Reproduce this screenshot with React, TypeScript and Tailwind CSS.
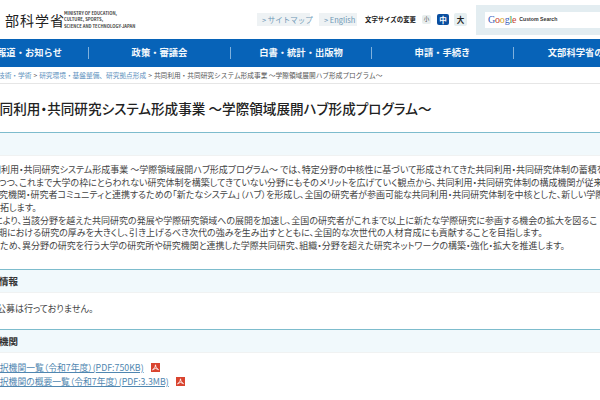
const SANS = "font-['Noto_Sans_CJK_JP','Noto_Sans',sans-serif]";

function Pdf() {
  return (
    <svg viewBox="0 0 10 10" className="ml-[7px] h-[9px] w-[9px] shrink-0 self-center">
      <rect width="10" height="10" fill="#d9442f" />
      <path d="M5 2 L5.6 5 L8.4 7.4 L5 6 L1.6 7.6 L4.4 5 Z" fill="none" stroke="#fff" strokeWidth="0.9" />
    </svg>
  );
}

function Line({ ml, children }: { ml: string; children: React.ReactNode }) {
  return <p className={`h-[12.7px] whitespace-nowrap leading-[12.7px] ${ml}`}>{children}</p>;
}

function Bar({ children, mt }: { children?: React.ReactNode; mt: string }) {
  return (
    <div className={`flex h-[24px] items-center border-t-[1.5px] border-b border-t-[#7dbccd] border-b-[#f0f2f2] bg-[#f1f9fc] text-[9.5px] font-bold text-[#333] ${mt}`}>
      {children}
    </div>
  );
}

const NAV = [
  { t: "報道・お知らせ", w: "ml-[-29px] w-[118px]" },
  { t: "政策・審議会", w: "w-[142px]" },
  { t: "白書・統計・出版物", w: "w-[141px]" },
  { t: "申請・手続き", w: "w-[142px]" },
  { t: "文部科学省の紹介", w: "w-[142px]" },
];

export default function App() {
  return (
    <div className={`h-[400px] w-[600px] overflow-hidden bg-white text-[#444] ${SANS}`}>
      {/* header */}
      <header className="flex h-[39px] items-center">
        <div className="ml-[-20px] w-[82px] shrink-0 whitespace-nowrap text-[14px] leading-none tracking-[1px] text-[#222]">
          <span className="mr-[10px]">文</span>部科学省
        </div>
        <div className="ml-[2px] w-[72px] shrink-0 text-[4.2px] font-bold leading-[6.4px] text-[#444]">
          <div>MINISTRY OF EDUCATION,</div>
          <div>CULTURE, SPORTS,</div>
          <div className="whitespace-nowrap">SCIENCE AND TECHNOLOGY-JAPAN</div>
        </div>
        <div className="ml-[121px] flex h-[13px] w-[53px] shrink-0 items-center whitespace-nowrap bg-[#eef2f4] pl-[5px] text-[7.5px] text-[#6d97b5]">&gt; サイトマップ</div>
        <div className="ml-[9px] flex h-[13px] w-[38px] shrink-0 items-center whitespace-nowrap bg-[#eef2f4] pl-[5px] text-[7.5px] text-[#6d97b5]">&gt; English</div>
        <div className="ml-[8px] w-[52px] shrink-0 whitespace-nowrap text-[6.4px] font-bold text-[#222]">文字サイズの変更</div>
        <div className="ml-[5px] flex h-[9px] w-[9px] shrink-0 items-center justify-center rounded-[2px] bg-[#e8eeee] text-[5.5px] text-[#444]">小</div>
        <div className="ml-[6px] flex h-[11px] w-[12px] shrink-0 items-center justify-center rounded-[2px] bg-[#0b4f9f] text-[7.5px] font-bold text-white">中</div>
        <div className="ml-[5px] flex h-[13px] w-[13px] shrink-0 items-center justify-center rounded-[2px] bg-[#e6eff1] text-[7.5px] font-bold text-[#222]">大</div>
        <div className="ml-[9px] flex h-[30px] w-[124px] shrink-0 items-center bg-[#e3edf1] pl-[9px]">
          <div className="flex h-[16px] flex-1 items-center whitespace-nowrap bg-white pl-[3px] font-['Liberation_Sans',sans-serif] text-[5.2px] font-bold text-[#333]">
            <span className="mr-[3px] font-['Liberation_Serif',serif] text-[10px] font-normal tracking-[-0.2px]">
              <span className="text-[#3a62c0]">G</span>
              <span className="text-[#c8402e]">o</span>
              <span className="text-[#d8a82e]">o</span>
              <span className="text-[#3a62c0]">g</span>
              <span className="text-[#3f9a45]">l</span>
              <span className="text-[#c8402e]">e</span>
            </span>
            Custom Search
          </div>
        </div>
      </header>

      {/* nav */}
      <nav className="flex h-[28px] items-center whitespace-nowrap bg-[#0763b8] text-[9.3px] font-bold text-[#f3f8fc]">
        {NAV.map((n, i) => (
          <div key={n.t} className={`flex h-[12px] shrink-0 items-center justify-center ${n.w} ${i < 4 ? "border-r border-r-[#7fb1dd]" : ""}`}>
            {n.t}
          </div>
        ))}
      </nav>

      {/* breadcrumb */}
      <div className="flex h-[17px] items-center whitespace-nowrap border-b border-b-[#e6e6e6] text-[6.7px] text-[#555]">
        <span className="ml-[-2px] text-[#5c90bd]">技術・学術</span>
        <span className="mx-[2px]">&gt;</span>
        <span className="text-[#5c90bd]">研究環境・基盤整備、研究拠点形成</span>
        <span className="mx-[2px]">&gt;</span>
        <span>共同利用・共同研究システム形成事業 ～学際領域展開ハブ形成プログラム～</span>
      </div>

      {/* title */}
      <h1 className="ml-[-14px] mt-[14px] whitespace-nowrap text-[13.6px] font-medium leading-[20px] text-[#222] [font-feature-settings:'palt']">共同利用・共同研究システム形成事業 ～学際領域展開ハブ形成プログラム～</h1>

      <Bar mt="mt-[14px]" />

      <div className="mt-[8px] text-[9px] text-[#444] [font-feature-settings:'palt']">
        <Line ml="ml-[-17px]">共同利用・共同研究システム形成事業 ～学際領域展開ハブ形成プログラム～ では、特定分野の中核性に基づいて形成されてきた共同利用・共同研究体制の蓄積を</Line>
        <Line ml="ml-[-2px]">つつ、これまで大学の枠にとらわれない研究体制を構築してきていない分野にもそのメリットを広げていく観点から、共同利用・共同研究体制の構成機関が従来</Line>
        <Line ml="ml-[-1px]">究機関・研究者コミュニティと連携するための「新たなシステム」（ハブ）を形成し、全国の研究者が参画可能な共同利用・共同研究体制を中核とした、新しい学際研究</Line>
        <Line ml="ml-[0px]">拓します。</Line>
        <Line ml="ml-[-6px]">により、当該分野を越えた共同研究の発展や学際研究領域への展開を加速し、全国の研究者がこれまで以上に新たな学際研究に参画する機会の拡大を図るこ</Line>
        <Line ml="ml-[-2px]">期における研究の厚みを大きくし、引き上げるべき次代の強みを生み出すとともに、全国的な次世代の人材育成にも貢献することを目指します。</Line>
        <Line ml="ml-[0px]">ため、異分野の研究を行う大学の研究所や研究機関と連携した学際共同研究、組織・分野を超えた研究ネットワークの構築・強化・拡大を推進します。</Line>
      </div>

      <Bar mt="mt-[16px]">
        <span className="ml-[-1px]">情報</span>
      </Bar>
      <p className="ml-[-3px] mt-[9px] h-[27px] whitespace-nowrap text-[9px] leading-[13px] [font-feature-settings:'palt']">公募は行っておりません。</p>

      <Bar mt="mt-0">
        <span className="ml-[-1px]">機関</span>
      </Bar>
      <ul className="mt-[8px] text-[8.8px] leading-[14px] text-[#4f86b0] [font-feature-settings:'palt']">
        <li className="ml-[-9px] flex whitespace-nowrap"><span className="underline">採択機関一覧（令和7年度）(PDF:750KB)</span><Pdf /></li>
        <li className="ml-[-9px] flex whitespace-nowrap"><span className="underline">採択機関の概要一覧（令和7年度）(PDF:3.3MB)</span><Pdf /></li>
      </ul>
    </div>
  );
}
